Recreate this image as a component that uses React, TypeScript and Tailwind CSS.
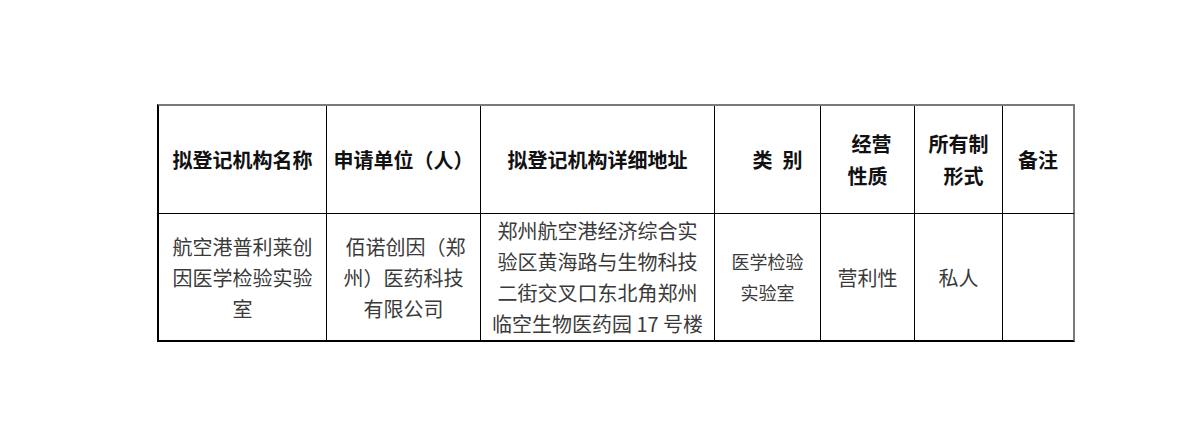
import React from "react";

const headFont = { fontFamily: '"Noto Sans CJK SC", "Noto Sans", sans-serif' };

function Cell({
  children,
  className = "",
}: {
  children?: React.ReactNode;
  className?: string;
}) {
  return (
    <div
      className={
        "flex flex-col items-center justify-center border-r border-b border-black text-center " +
        className
      }
    >
      {children}
    </div>
  );
}

export default function App() {
  return (
    <div
      className="w-[1200px] h-[448px] bg-white pt-[104px] pl-[157px]"
      style={headFont}
    >
      <div className="grid w-fit grid-cols-[168px_154px_234px_106px_94px_88px_72px] grid-rows-[108px_128px] border-l-2 border-t-2 border-l-black border-t-[#7a7a7a]">
        {/* header row */}
        <Cell className="text-[20px] font-bold text-[#111] leading-[32px]">
          拟登记机构名称
        </Cell>
        <Cell className="text-[20px] font-bold text-[#111] leading-[32px]">
          申请单位（人）
        </Cell>
        <Cell className="text-[20px] font-bold text-[#111] leading-[32px]">
          拟登记机构详细地址
        </Cell>
        <Cell className="text-[20px] font-bold text-[#111] leading-[32px]">
          <div className="pl-[20px]">
            <span>类</span>
            <span className="ml-[10px]">别</span>
          </div>
        </Cell>
        <Cell className="text-[20px] font-bold text-[#111] leading-[32px]">
          <div className="pl-[8px]">经营</div>
          <div>性质</div>
        </Cell>
        <Cell className="text-[20px] font-bold text-[#111] leading-[32px]">
          <div>所有制</div>
          <div className="pl-[10px]">形式</div>
        </Cell>
        <Cell className="text-[20px] font-bold text-[#111] leading-[32px] border-r-2 border-r-[#7a7a7a]">
          备注
        </Cell>

        {/* body row */}
        <Cell className="text-[20px] text-[#3a3a3a] leading-[31px] border-b-2">
          <div className="whitespace-nowrap">航空港普利莱创</div>
          <div className="whitespace-nowrap">因医学检验实验</div>
          <div>室</div>
        </Cell>
        <Cell className="text-[20px] text-[#3a3a3a] leading-[31px] border-b-2">
          <div className="whitespace-nowrap pl-[4px]">佰诺创因（郑</div>
          <div className="whitespace-nowrap">州）医药科技</div>
          <div>有限公司</div>
        </Cell>
        <Cell className="text-[20px] text-[#3a3a3a] leading-[31px] border-b-2">
          <div className="whitespace-nowrap">郑州航空港经济综合实</div>
          <div className="whitespace-nowrap">验区黄海路与生物科技</div>
          <div className="whitespace-nowrap">二街交叉口东北角郑州</div>
          <div className="whitespace-nowrap">临空生物医药园 17 号楼</div>
        </Cell>
        <Cell className="text-[18px] text-[#3a3a3a] leading-[31px] border-b-2">
          <div>医学检验</div>
          <div>实验室</div>
        </Cell>
        <Cell className="text-[20px] text-[#3a3a3a] leading-[31px] border-b-2">
          营利性
        </Cell>
        <Cell className="text-[20px] text-[#3a3a3a] leading-[31px] border-b-2">
          私人
        </Cell>
        <Cell className="border-b-2 border-r-2 border-r-[#7a7a7a]" />
      </div>
    </div>
  );
}
